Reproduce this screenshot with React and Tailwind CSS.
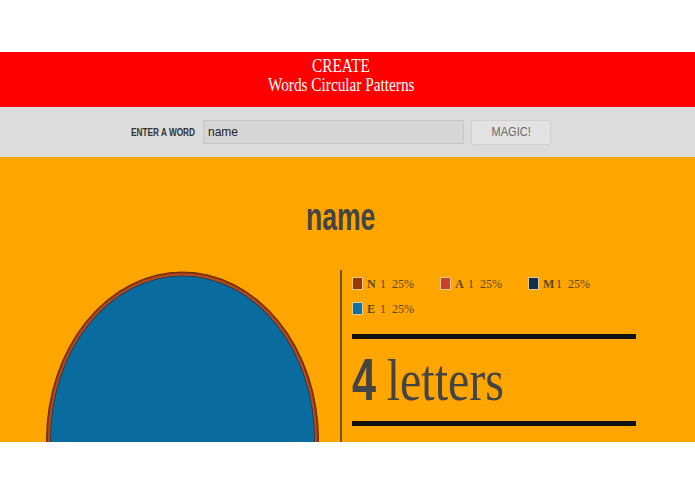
const letters = [
  { ch: 'N', count: 1, pct: '25%', color: 'bg-[#9a3808]' },
  { ch: 'A', count: 1, pct: '25%', color: 'bg-[#c4432a]' },
  { ch: 'M', count: 1, pct: '25%', color: 'bg-[#0c3150]' },
  { ch: 'E', count: 1, pct: '25%', color: 'bg-[#0b72a8]' },
];

function Pattern() {
  return (
    <svg width="341" height="180" viewBox="0 0 341 180" className="block">
      <ellipse cx="182.5" cy="170" rx="136" ry="168" fill="#8a3510" stroke="#6a2c10" strokeWidth="1" />
      <ellipse cx="182.5" cy="170" rx="134.5" ry="166.5" fill="#b9481a" />
      <ellipse cx="182.5" cy="170" rx="132.5" ry="164.5" fill="#1a3a50" />
      <ellipse cx="182.5" cy="170" rx="131.7" ry="163.7" fill="#0a6c9e" />
    </svg>
  );
}

export default function App() {
  return (
    <div className="w-[695px] h-[494px] bg-white flex flex-col" style={{ fontFamily: '"Liberation Sans", Arial, sans-serif' }}>
      <div className="h-[52px] shrink-0" />

      <div className="h-[55px] shrink-0 bg-[#ff0000] pr-[13px] pt-[5px] flex flex-col items-center text-white font-['Liberation_Serif',serif] text-[18px] leading-[19px]">
        <span className="scale-x-85">CREATE</span>
        <span className="scale-x-85">Words Circular Patterns</span>
      </div>

      <div className="h-[50px] shrink-0 bg-[#dcdcdc] pr-[13px] flex items-center justify-center">
        <span className="w-[66px] text-[11px] font-bold text-[#333] whitespace-nowrap scale-x-75 origin-left mr-[6px]">
          ENTER A WORD
        </span>
        <div className="w-[261px] h-[24px] bg-[#d6d6d6] border border-[#c6c6c6] flex items-center pl-[4px] text-[12px] text-[#222]">
          name
        </div>
        <div className="ml-[7px] w-[80px] h-[25px] bg-[#e3e3e3] border border-[#d0d0d0] rounded-[2px] flex items-center justify-center text-[13px] text-[#6a6a6a]">
          <span className="scale-x-85">MAGIC!</span>
        </div>
      </div>

      <div className="h-[285px] shrink-0 bg-[#ffa500] overflow-hidden flex flex-col">
        <div className="shrink-0 pr-[13px] pt-[40px] h-[113px] flex justify-center">
          <span className="text-[38px] leading-[40px] font-bold text-[#444] scale-x-70">name</span>
        </div>
        <div className="flex shrink-0">
          <div className="w-[340px]">
            <Pattern />
          </div>
          <div className="w-[296px] h-[180px] border-l-2 border-[#6b5625] pl-[10px] pt-[7px] flex flex-col">
            <div className="flex flex-wrap gap-y-[12px] font-['Liberation_Serif',serif] text-[12px] text-[#5a4a20]">
              {letters.map((l) => (
                <div key={l.ch} className="w-[88px] flex items-center h-[13px]">
                  <span className={`shrink-0 w-[11px] h-[13px] ${l.color} border border-[#e8c88a] mr-[4px]`} />
                  <span className="shrink-0 font-bold w-[13px]">{l.ch}</span>
                  <span className="shrink-0 w-[9px]">{l.count}</span>
                  <span className="shrink-0 ml-[3px]">{l.pct}</span>
                </div>
              ))}
            </div>
            <div className="mt-[19px] h-[5px] bg-[#111] w-[284px]" />
            <div className="h-[82px] flex items-center text-[#444]">
              <div className="scale-x-80 origin-left whitespace-nowrap flex items-baseline">
                <span className="text-[60px] leading-[60px] font-bold font-['Liberation_Sans',sans-serif] scale-x-90 origin-left">4</span>
                <span className="ml-[10px] text-[60px] leading-[60px] font-['Liberation_Serif',serif]">letters</span>
              </div>
            </div>
            <div className="h-[5px] bg-[#111] w-[284px]" />
          </div>
        </div>
      </div>

      <div className="flex-1 bg-white" />
    </div>
  );
}
